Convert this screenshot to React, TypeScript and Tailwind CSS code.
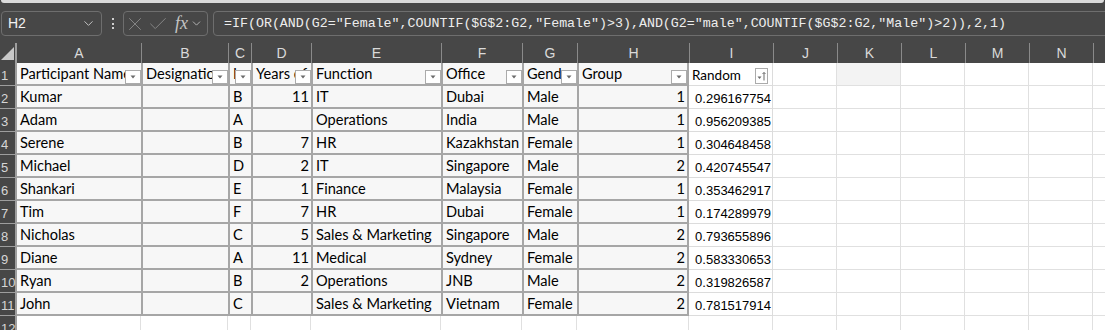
import React from "react";
import { X, Check, ChevronDown } from "lucide-react";

const LETTERS = ["A", "B", "C", "D", "E", "F", "G", "H", "I", "J", "K", "L", "M", "N", "O"];

const HEADERS = ["Participant Name", "Designation", "Level", "Years of Experience", "Function", "Office", "Gender", "Group"];

const ROWS: string[][] = [
  ["Kumar", "", "B", "11", "IT", "Dubai", "Male", "1", "0.296167754"],
  ["Adam", "", "A", "", "Operations", "India", "Male", "1", "0.956209385"],
  ["Serene", "", "B", "7", "HR", "Kazakhstan", "Female", "1", "0.304648458"],
  ["Michael", "", "D", "2", "IT", "Singapore", "Male", "2", "0.420745547"],
  ["Shankari", "", "E", "1", "Finance", "Malaysia", "Female", "1", "0.353462917"],
  ["Tim", "", "F", "7", "HR", "Dubai", "Female", "1", "0.174289979"],
  ["Nicholas", "", "C", "5", "Sales & Marketing", "Singapore", "Male", "2", "0.793655896"],
  ["Diane", "", "A", "11", "Medical", "Sydney", "Female", "2", "0.583330653"],
  ["Ryan", "", "B", "2", "Operations", "JNB", "Male", "2", "0.319826587"],
  ["John", "", "C", "", "Sales & Marketing", "Vietnam", "Female", "2", "0.781517914"],
];

const FORMULA =
  '=IF(OR(AND(G2="Female",COUNTIF($G$2:G2,"Female")>3),AND(G2="male",COUNTIF($G$2:G2,"Male")>2)),2,1)';

const GRID =
  "grid grid-cols-[17px_124px_87px_23px_60px_130px_81px_55px_112px_84px_64px_64px_64px_64px_64px_64px]";

const FilterButton = () => (
  <span className="absolute right-0 bottom-0 flex h-[14px] w-[16px] items-center justify-center border border-[#ababab] bg-white">
    <svg width="8" height="6" viewBox="0 0 8 6">
      <path d="M1.5 1.5h5L4 4.5z" fill="#6b6b6b" />
    </svg>
  </span>
);

const SortButton = () => (
  <span className="absolute right-[4px] bottom-[1px] flex h-[16px] w-[13px] items-center justify-center border border-[#ababab] bg-white">
    <svg width="11" height="12" viewBox="0 0 11 12">
      <path d="M1.5 6.5h4L3.5 9z" fill="#6b6b6b" />
      <path d="M8 10.5V2.5M6.5 4L8 2.5 9.5 4" stroke="#6b6b6b" strokeWidth="1" fill="none" />
    </svg>
  </span>
);

const FormulaBar = () => (
  <div className="h-[43px] bg-[#474747] overflow-hidden">
    <div className="mx-[1px] h-[3px] rounded-b-[5px] bg-[#dadada]" />
    <div className="flex items-center pt-[8px]">
      <div className="ml-[1px] flex h-[25px] w-[101px] shrink-0 items-center justify-between rounded-[4px] border border-[#6e6e6e] pl-[6px] pr-[5px]">
        <span className="font-['Liberation_Sans',sans-serif] text-[14px] text-[#f2f2f2]">H2</span>
        <ChevronDown size={15} strokeWidth={1.5} className="text-[#c8c8c8]" />
      </div>
      <div className="flex w-[21px] shrink-0 flex-col items-center gap-[2.5px]">
        <span className="h-[2px] w-[2px] bg-[#cfcfcf]" />
        <span className="h-[2px] w-[2px] bg-[#cfcfcf]" />
        <span className="h-[2px] w-[2px] bg-[#cfcfcf]" />
      </div>
      <div className="flex h-[25px] w-[85px] shrink-0 items-center rounded-[4px] border border-[#6e6e6e] pl-[0px]">
        <X size={22} strokeWidth={1} className="text-[#8a8a8a]" />
        <Check size={22} strokeWidth={1} className="ml-[1px] text-[#8a8a8a]" />
        <span className="ml-[6px] font-['Liberation_Serif',serif] text-[18px] italic text-[#c4c4c4]">fx</span>
        <ChevronDown size={13} strokeWidth={1.5} className="ml-[2px] text-[#c8c8c8]" />
      </div>
      <div className="ml-[5px] flex h-[25px] w-[920px] shrink-0 items-center rounded-[4px] border border-[#6e6e6e] pl-[10px]">
        <span className="whitespace-nowrap font-['Liberation_Mono',monospace] text-[13.3px] text-[#ededed]">{FORMULA}</span>
      </div>
    </div>
  </div>
);

const App = () => {
  const rowCount = 12;

  const cells: React.ReactNode[] = [];

  // column header row
  cells.push(
    <div key="corner" className="flex items-end justify-end border-r-2 border-[#9e9e9e] bg-[#474747] pr-[1px] pb-[3px]">
      <svg width="13" height="13" viewBox="0 0 13 13">
        <path d="M13 0V13H0Z" fill="#c8c8c8" />
      </svg>
    </div>
  );
  LETTERS.forEach((l, i) => {
    cells.push(
      <div
        key={"h" + l}
        className={
          "flex items-center justify-center bg-[#474747] font-['Liberation_Sans',sans-serif] text-[14px] text-[#dadada] " +
          (i > 0 ? "border-l border-[#8a8a8a]" : "")
        }
      >
        {l}
      </div>
    );
  });

  for (let r = 1; r <= rowCount; r++) {
    cells.push(
      <div
        key={"r" + r}
        className="flex items-center border-r-2 border-b border-[#9e9e9e] bg-[#474747] pl-[1px] pt-[3px] font-['Liberation_Sans',sans-serif] text-[13px] text-[#d6d6d6]"
      >
        {r}
      </div>
    );

    LETTERS.forEach((_, c) => {
      const key = r + "-" + c;
      const inTable = r <= 11 && c <= 7;

      if (inTable) {
        const isNum = c === 3 || c === 7;
        const text = r === 1 ? HEADERS[c] : ROWS[r - 2][c];
        cells.push(
          <div
            key={key}
            className={
              "relative flex items-center overflow-hidden whitespace-nowrap border-b-2 border-[#a6a6a6] bg-[#f7f7f7] pt-[1px] font-['Lato',sans-serif] text-[14.6px] text-black " +
              (c > 0 ? "border-l-2 " : "") +
              (c === 7 ? "border-r-2 " : "") +
              (r > 1 && isNum ? "justify-end pr-[2px]" : "pl-[3px]")
            }
          >
            {text}
            {r === 1 && <FilterButton />}
          </div>
        );
        return;
      }

      if (c === 8 && r <= 11) {
        cells.push(
          <div
            key={key}
            className={
              "relative flex items-center overflow-hidden whitespace-nowrap border-r border-b border-[#dcdcdc] bg-white " +
              (r === 1
                ? "pl-[3px] pt-[3px] font-['Lato',sans-serif] text-[13.5px] text-black"
                : "justify-end pr-[1px] pt-[3px] font-['Liberation_Sans',sans-serif] text-[13px] text-black")
            }
          >
            {r === 1 ? "Random" : ROWS[r - 2][8]}
            {r === 1 && <SortButton />}
          </div>
        );
        return;
      }

      cells.push(
        <div
          key={key}
          className={
            "border-r border-b border-[#e0e0e0] " + (r === 1 && c === 10 ? "bg-[#f3f3f3]" : "bg-white")
          }
        />
      );
    });
  }

  return (
    <div className="h-[330px] w-[1105px] overflow-hidden bg-white">
      <FormulaBar />
      <div className={GRID + " grid-rows-[20px_repeat(12,23px)]"}>{cells}</div>
    </div>
  );
};

export default App;
